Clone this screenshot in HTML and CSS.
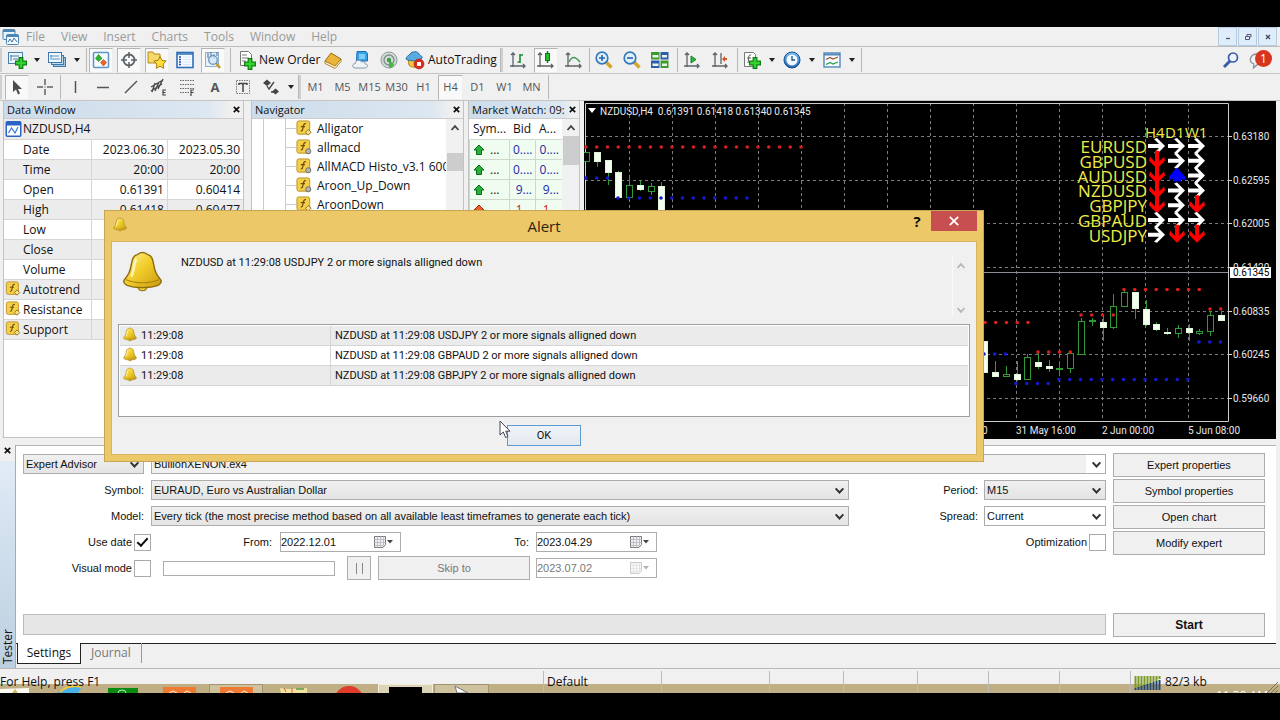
FILE: index.html
```html
<!DOCTYPE html>
<html lang="en">
<head>
<meta charset="utf-8">
<title>NZDUSD,H4</title>
<link rel="stylesheet" href="styles.css">
</head>
<body>
<svg class="defs" aria-hidden="true">
  <defs>
    <linearGradient id="gold" x1="0" y1="0" x2="1" y2="1"><stop offset="0" stop-color="#fff3a0"/><stop offset=".45" stop-color="#f3cf2c"/><stop offset="1" stop-color="#c89a10"/></linearGradient>
    <linearGradient id="blue" x1="0" y1="0" x2="0" y2="1"><stop offset="0" stop-color="#7cc3f2"/><stop offset="1" stop-color="#1d5fae"/></linearGradient>
    <symbol id="i-plus" viewBox="0 0 10 10"><path d="M3.500.5h3v3h3v3h-3v3h-3v-3h-3v-3h3z" fill="#32d52c" stroke="#0b7d12"/></symbol>
    <symbol id="i-newchart" viewBox="0 0 20 20"><rect x="1.500" y="2.500" width="14" height="11" fill="#eaf4fc" stroke="#4a7fa8"/><path d="M4 5v6M3 6h9M6 9h7" stroke="#4a7fa8" fill="none"/><use href="#i-plus" x="8" y="7" width="12" height="12"/></symbol>
    <symbol id="i-profiles" viewBox="0 0 20 20"><rect x="6.500" y="7.500" width="12" height="9" fill="#9cc8e8" stroke="#3f78a8"/><rect x="4.500" y="5.500" width="12" height="9" fill="#bfdcf0" stroke="#3f78a8"/><rect x="1.500" y="2.500" width="13" height="10" fill="#eef7fd" stroke="#3f78a8"/><path d="M4 5v5M3 6h9M5 9h8" stroke="#5d8fb5" fill="none"/></symbol>
    <symbol id="i-market" viewBox="0 0 20 20"><rect x="2.500" y="2.500" width="15" height="15" rx="1" fill="#f6fbff" stroke="#5b95c8" stroke-width="1.500"/><path d="M7.500 4.500l3.500 4-3.500 3-3-3z" fill="#2eb62c" stroke="#147a1a" stroke-width=".6"/><path d="M12.500 16l-3-3.500 3-3 3 3z" fill="#f0622a" stroke="#b03a10" stroke-width=".6"/></symbol>
    <symbol id="i-target" viewBox="0 0 20 20"><circle cx="10" cy="10" r="5.500" fill="none" stroke="#5a6268" stroke-width="1.800"/><path d="M10 2v6M10 12v6M2 10h6M12 10h6" stroke="#5a6268" stroke-width="1.500"/></symbol>
    <symbol id="i-star" viewBox="0 0 20 20"><path d="M1 2h5l1 2h6v9H1z" fill="#f7d96a" stroke="#b58a1a"/><path d="M13 6.500l1.900 3.900 4.300.6-3.100 3 .7 4.300-3.800-2-3.800 2 .7-4.300-3.100-3 4.300-.6z" fill="#ffdf38" stroke="#a87a10"/></symbol>
    <symbol id="i-data" viewBox="0 0 20 20"><rect x="2" y="2.500" width="16" height="15" fill="#f4faff" stroke="#2f6fb8" stroke-width="1.600"/><path d="M2 4h16" stroke="#2f6fb8" stroke-width="1.500"/><path d="M4 7h2M4 9.500h2M4 12h2M4 14.500h2" stroke="#2d4a9a" stroke-width="1.300"/><path d="M8 7h8M8 9.500h8M8 12h8M8 14.500h8" stroke="#d8e8f6"/></symbol>
    <symbol id="i-tester" viewBox="0 0 20 20"><rect x="2.500" y="2.500" width="13" height="14" fill="#e9f2fa" stroke="#8fb2cf"/><path d="M5 3v5M8 2v6M11 4v5M14 2v4" stroke="#3c6b95"/><path d="M13 13l4 5" stroke="#c79a2a" stroke-width="2.600"/><circle cx="10" cy="10" r="4.300" fill="#cfe6f8" fill-opacity=".8" stroke="#6b93b5" stroke-width="1.300"/></symbol>
    <symbol id="i-order" viewBox="0 0 20 20"><path d="M3.500 1.500h8l3 3v11h-11z" fill="#fff" stroke="#757575"/><path d="M5 5h5M5 8h7M5 11h4" stroke="#777"/><use href="#i-plus" x="7" y="8" width="12" height="12"/></symbol>
    <symbol id="i-book" viewBox="0 0 20 20"><path d="M2 11l6-8 10 6-6 8z" fill="#e9b53a" stroke="#9a6a12"/><path d="M2 11l10 5 6-7v2.500l-6 7-10-5z" fill="#fff0c0" stroke="#9a6a12" stroke-width=".8"/></symbol>
    <symbol id="i-cloud" viewBox="0 0 20 20"><path d="M6 1.500h9l1.500 2V11h-11z" fill="#38a2e6" stroke="#1a6fb5"/><path d="M8 4h6v5H8z" fill="#7dccf7"/><path d="M4 18c-3 0-3-4.500.3-4.500 0-4 5.500-4 6.200-1.500 2-1 4 .5 3.700 2 3-.2 3 4 0 4z" fill="#eef3f8" stroke="#8899aa"/></symbol>
    <symbol id="i-signal" viewBox="0 0 20 20"><circle cx="10" cy="10" r="8" fill="#d3dcda" stroke="#8f9b98"/><circle cx="10" cy="10" r="5" fill="none" stroke="#7d8f88" stroke-width="1.300"/><path d="M10 10v8c3 0 5-2 5-4z" fill="#4bb548"/><circle cx="10" cy="10" r="2.200" fill="#3ba03c"/></symbol>
    <symbol id="i-auto" viewBox="0 0 20 20"><path d="M3 9h13l-1 6c-1 3-9 3-11 0z" fill="#f4c842" stroke="#b18418"/><path d="M1 9c0-3 3-3 4-5 2-3 8-3 9 0 1 2 4 2 3 4-3 3-11 4-16 1z" fill="#59ace0" stroke="#2a6fa5"/><circle cx="14" cy="14" r="5" fill="#d92c1c" stroke="#a51b10" stroke-width=".6"/><rect x="12" y="12" width="4" height="4" fill="#fff"/></symbol>
    <symbol id="i-bars" viewBox="0 0 20 20"><path d="M5 3v14M2 16h15M3 5l2-2 2 2M15 14l2 2-2 2" stroke="#5b6368" stroke-width="1.300" fill="none"/><path d="M12 4v9M9.500 12h2.500M12 5h3" stroke="#1b9030" stroke-width="1.600"/></symbol>
    <symbol id="i-candle" viewBox="0 0 20 20"><path d="M4 3v14M1 16h16M2 5l2-2 2 2M15 14l2 2-2 2" stroke="#5b6368" stroke-width="1.300" fill="none"/><path d="M11.500 1v12" stroke="#0a7a18" stroke-width="1.400"/><rect x="9.500" y="3.500" width="4" height="7" fill="#20c030" stroke="#0a7a18"/></symbol>
    <symbol id="i-line" viewBox="0 0 20 20"><path d="M4 3v14M1 16h16M2 5l2-2 2 2M15 14l2 2-2 2" stroke="#5b6368" stroke-width="1.300" fill="none"/><path d="M5 12c3-6 6-6 11 0" stroke="#3f9a58" stroke-width="1.400" fill="none"/></symbol>
    <symbol id="i-zoomin" viewBox="0 0 20 20"><path d="M12 12l5.500 5.500" stroke="#d5a62c" stroke-width="3.400"/><circle cx="8" cy="8" r="5.800" fill="#dff0fb" stroke="#3779b8" stroke-width="1.700"/><path d="M5 8h6M8 5v6" stroke="#2464a8" stroke-width="1.600"/></symbol>
    <symbol id="i-zoomout" viewBox="0 0 20 20"><path d="M12 12l5.500 5.500" stroke="#d5a62c" stroke-width="3.400"/><circle cx="8" cy="8" r="5.800" fill="#dff0fb" stroke="#3779b8" stroke-width="1.700"/><path d="M5 8h6" stroke="#2464a8" stroke-width="1.600"/></symbol>
    <symbol id="i-tiles" viewBox="0 0 20 20"><path d="M1 2h8.500v7.500H1zM10.500 10.500h8V18h-8z" fill="#3a9c2c"/><path d="M10.500 2h8v7.500h-8zM1 10.500h8.500V18H1z" fill="#2c5eae"/><path d="M2.500 5h6v2.500h-6zM12 5h5v2.500h-5zM2.500 13.500h6V16h-6zM12 13.500h5V16h-5z" fill="#e8f4e6"/></symbol>
    <symbol id="i-scroll" viewBox="0 0 20 20"><path d="M5 3v14M2 16h15M3 5l2-2 2 2M15 14l2 2-2 2" stroke="#5b6368" stroke-width="1.300" fill="none"/><path d="M9 6l5 3.500-5 3.500z" fill="#2eb840" stroke="#12802a"/></symbol>
    <symbol id="i-shift" viewBox="0 0 20 20"><path d="M5 3v14M2 16h15M3 5l2-2 2 2M15 14l2 2-2 2M11 3v11" stroke="#5b6368" stroke-width="1.300" fill="none"/><path d="M12 9l3-3v2h2v2h-2v2z" fill="#d0522a"/></symbol>
    <symbol id="i-indic" viewBox="0 0 20 20"><path d="M2.500 2.500h9l2 2v12h-11z" fill="#fff" stroke="#777"/><path d="M9 5c-3-1-2 4-3 8M5 8h4" stroke="#555" fill="none"/><use href="#i-plus" x="7" y="7" width="12" height="12"/></symbol>
    <symbol id="i-clock" viewBox="0 0 20 20"><circle cx="10" cy="10" r="8" fill="url(#blue)" stroke="#155090"/><circle cx="10" cy="10" r="5.500" fill="#f2f8fd"/><path d="M10 6v4h3" stroke="#1e4f86" stroke-width="1.300" fill="none"/></symbol>
    <symbol id="i-templ" viewBox="0 0 20 20"><rect x="2" y="3" width="16" height="14" fill="#f6fbff" stroke="#5289b8" stroke-width="1.400"/><path d="M2 4.500h16" stroke="#5289b8" stroke-width="2"/><path d="M4 9.500l4-2 3 1.500 5-2" stroke="#a05030" fill="none" stroke-width="1.300"/><path d="M4 14.500l4-2 3 1.500 5-2" stroke="#2a9a48" fill="none" stroke-width="1.300"/></symbol>
    <symbol id="i-cursor" viewBox="0 0 20 20"><path d="M6 3v12l3-2.500 2 5 2-1-2-4.500h4z" fill="#4a4e52"/></symbol>
    <symbol id="i-cross" viewBox="0 0 20 20"><path d="M10 2v6M10 12v6M2 10h6M12 10h6M9.500 10h1" stroke="#5b6368" stroke-width="1.500"/></symbol>
    <symbol id="i-vline" viewBox="0 0 20 20"><path d="M10.500 4v12" stroke="#555" stroke-width="1.500"/></symbol>
    <symbol id="i-hline" viewBox="0 0 20 20"><path d="M4 10.500h12" stroke="#555" stroke-width="1.500"/></symbol>
    <symbol id="i-diag" viewBox="0 0 20 20"><path d="M4 16L16 4" stroke="#555" stroke-width="1.500"/></symbol>
    <symbol id="i-channel" viewBox="0 0 20 20"><path d="M2 10L14 3M2 14L13 7M3 15L6 6M6 14l4-9M9 12l5-10" stroke="#4a4a4a" stroke-width="1.400"/><path d="M17 13h-3v5h3M14 15.500h2.500" stroke="#444" stroke-width="1.200" fill="none"/></symbol>
    <symbol id="i-fibo" viewBox="0 0 20 20"><path d="M3 3.500h14M3 7.500h14M3 11.500h14M3 15.500h9" stroke="#666" stroke-dasharray="1.500 1" stroke-width="1.200"/><path d="M17 13h-3v6M14 15.500h2.500" stroke="#444" stroke-width="1.200" fill="none"/></symbol>
    <symbol id="i-label" viewBox="0 0 20 20"><rect x="3.500" y="3.500" width="13" height="13" fill="none" stroke="#777" stroke-dasharray="1.500 1"/><path d="M6 6.500h8M10 6.500V15M6 6v2M14 6v2" stroke="#444" stroke-width="1.500"/></symbol>
    <symbol id="i-arrows" viewBox="0 0 20 20"><path d="M2 6l4-3.500 4 3.500-4 3zM11 14.500l3.500-3 3.500 3-3.500 3z" fill="#444"/><path d="M6 9l2 3 5-7M10 15h3" stroke="#444" fill="none" stroke-width="1.300"/></symbol>
    <symbol id="i-search" viewBox="0 0 20 20"><path d="M9 11l-6 6" stroke="#3a5ca8" stroke-width="3"/><circle cx="12" cy="7.500" r="4.500" fill="#eef3fb" stroke="#3a5ca8" stroke-width="1.700"/></symbol>
    <symbol id="i-chat" viewBox="0 0 20 20"><path d="M8 4C1 4-1 12 5 14l-.5 4 4-3.500c8 0 9-10-.5-10.500z" fill="#f4f4f4" stroke="#8d9296" stroke-width="1.300"/></symbol>
    <symbol id="i-func" viewBox="0 0 18 18"><rect x="1" y="1" width="13.500" height="14" rx="2" fill="#f4cf4a" stroke="#b98f22"/><path d="M10.500 4c-2.500-.8-2.500 2-3 4s-.5 4-2.500 3.500M5 7h4.500" stroke="#6d4e08" stroke-width="1.300" fill="none"/><path d="M13 10l3 3-3 3-3-3z" fill="#f6e08c" stroke="#8d6e1c"/></symbol>
    <symbol id="i-funcg" viewBox="0 0 18 18"><rect x="1" y="1" width="13.500" height="14" rx="2" fill="#f4cf4a" stroke="#b98f22"/><path d="M10.500 4c-2.500-.8-2.500 2-3 4s-.5 4-2.500 3.500M5 7h4.500" stroke="#6d4e08" stroke-width="1.300" fill="none"/><circle cx="13" cy="13" r="2.700" fill="#b5b5b0" stroke="#6b6b6b"/></symbol>
    <symbol id="i-chartwin" viewBox="0 0 16 16"><rect x=".75" y=".75" width="14.500" height="14.500" rx="1" fill="#fff" stroke="#2a62c4" stroke-width="1.500"/><path d="M1 1h14v3.500H1z" fill="#2a62c4"/><path d="M3 12l3-5 3.500 5 3-6" stroke="#3f7fd8" fill="none" stroke-width="1.300"/></symbol>
    <symbol id="i-up" viewBox="0 0 12 12"><path d="M6 1l5 5H8.500v4.500h-5V6H1z" fill="#27b13a" stroke="#0d6a1c"/></symbol>
    <symbol id="i-down" viewBox="0 0 12 12"><path d="M6 1l5 5H8.500v4.500h-5V6H1z" fill="#f0602c" stroke="#a82c0c"/></symbol>
    <symbol id="i-bell" viewBox="0 0 40 40"><path d="M16 35c0 5 8 5 8 0z" fill="#f0cf3a" stroke="#8d6d10"/><path d="M20 1.500c3 0 4 1.500 5 2 4 1 5 4 6 10 1 7 3 10 7 15 1 2-1 4-3 5-8 3-22 3-30 0-2-1-4-3-3-5 4-5 6-8 7-15 1-6 2-9 6-10 1-.5 2-2 5-2z" fill="url(#gold)" stroke="#8d6d10" stroke-width="1.400"/><path d="M4 28c9 4 23 4 32 0" fill="none" stroke="#a9830f"/><path d="M14 8c-3 5-2 12-5 17" fill="none" stroke="#fffbd8" stroke-width="2.500" opacity=".8"/></symbol>
    <symbol id="i-chev" viewBox="0 0 10 10"><path d="M1.500 3L5 6.800 8.500 3" fill="none" stroke="currentColor" stroke-width="1.800"/></symbol>
    <symbol id="i-chevup" viewBox="0 0 10 10"><path d="M1.500 7L5 3.200 8.500 7" fill="none" stroke="currentColor" stroke-width="1.800"/></symbol>
    <symbol id="i-x" viewBox="0 0 10 10"><path d="M2 2l6 6M8 2l-6 6" stroke="currentColor" stroke-width="1.900"/></symbol>
    <symbol id="i-xthin" viewBox="0 0 10 10"><path d="M2 2l6 6M8 2l-6 6" stroke="currentColor" stroke-width="1.300"/></symbol>
    <symbol id="i-cal" viewBox="0 0 20 12"><path d="M.5.500h11v8l-2.500 3H.5z" fill="#f2f2f2" stroke="#777"/><path d="M.5 3.500h11M.5 6.500h11M.5 9.500h9M3.500.5v11M6.500.5v11M9.500.5v9" stroke="#bdbdc4"/><path d="M13 4h6l-3 3.500z" fill="#444"/></symbol>
  </defs>
</svg>

<div class="window">
  <nav class="menubar">
    <svg class="app-icon" viewBox="0 0 18 18"><rect x="1" y="1.500" width="12" height="10" rx="1" fill="#e8f3fb" stroke="#4d86b3"/><path d="M1 3h12" stroke="#4d86b3" stroke-width="2"/><rect x="4.500" y="6.500" width="12" height="10" rx="1" fill="#f4faff" stroke="#4d86b3"/><path d="M4.500 8h12" stroke="#4d86b3" stroke-width="2"/><path d="M6 14l2-3 2 3 2-4 3 4" fill="none" stroke="#3c74a8"/></svg>
    <button>File</button><button>View</button><button>Insert</button><button>Charts</button><button>Tools</button><button>Window</button><button>Help</button>
    <div class="mdi">
      <button aria-label="Minimize"><svg viewBox="0 0 10 10"><path d="M3 6.500h4" stroke="#557" stroke-width="1.300"/></svg></button>
      <button aria-label="Restore"><svg viewBox="0 0 10 10"><path d="M4 4V2.500h4V5H7M2.500 4.500h4v3h-4z" stroke="#557" fill="none"/></svg></button>
      <button aria-label="Close"><svg viewBox="0 0 10 10"><path d="M3 3l4 4M7 3L3 7" stroke="#446" stroke-width="1.200"/></svg></button>
    </div>
  </nav>

  <div class="toolbar">
    <i class="grip"></i>
    <button class="tool" aria-label="New chart"><svg><use href="#i-newchart"/></svg></button><button class="drop" aria-label="Chart list"></button>
    <button class="tool" aria-label="Profiles"><svg><use href="#i-profiles"/></svg></button><button class="drop" aria-label="Profile list"></button>
    <i class="sep"></i>
    <button class="tool on" aria-label="Market Watch"><svg><use href="#i-market"/></svg></button>
    <button class="tool on" aria-label="Data Window"><svg><use href="#i-target"/></svg></button>
    <button class="tool on" aria-label="Navigator"><svg><use href="#i-star"/></svg></button>
    <button class="tool" aria-label="Terminal"><svg><use href="#i-data"/></svg></button>
    <button class="tool on" aria-label="Strategy Tester"><svg><use href="#i-tester"/></svg></button>
    <i class="sep"></i>
    <button class="wide order"><svg><use href="#i-order"/></svg>New Order</button>
    <button class="tool" aria-label="MetaEditor"><svg><use href="#i-book"/></svg></button>
    <button class="tool" aria-label="Hosting"><svg><use href="#i-cloud"/></svg></button>
    <button class="tool" aria-label="Signals"><svg><use href="#i-signal"/></svg></button>
    <button class="wide auto"><svg><use href="#i-auto"/></svg>AutoTrading</button>
    <i class="sep"></i><i class="grip"></i>
    <button class="tool" aria-label="Bar chart"><svg><use href="#i-bars"/></svg></button>
    <button class="tool on" aria-label="Candlesticks"><svg><use href="#i-candle"/></svg></button>
    <button class="tool" aria-label="Line chart"><svg><use href="#i-line"/></svg></button>
    <i class="sep thin"></i>
    <button class="tool" aria-label="Zoom in"><svg><use href="#i-zoomin"/></svg></button>
    <button class="tool" aria-label="Zoom out"><svg><use href="#i-zoomout"/></svg></button>
    <button class="tool" aria-label="Tile windows"><svg><use href="#i-tiles"/></svg></button>
    <i class="sep"></i>
    <button class="tool" aria-label="Auto scroll"><svg><use href="#i-scroll"/></svg></button>
    <button class="tool" aria-label="Chart shift"><svg><use href="#i-shift"/></svg></button>
    <i class="sep"></i>
    <button class="tool" aria-label="Indicators"><svg><use href="#i-indic"/></svg></button><button class="drop" aria-label="Indicator list"></button>
    <button class="tool" aria-label="Periods"><svg><use href="#i-clock"/></svg></button><button class="drop" aria-label="Period list"></button>
    <button class="tool" aria-label="Templates"><svg><use href="#i-templ"/></svg></button><button class="drop" aria-label="Template list"></button>
    <i class="sep"></i>
    <div class="right">
      <button class="tool" aria-label="Search"><svg><use href="#i-search"/></svg></button>
      <button class="tool chat" aria-label="Messages"><svg><use href="#i-chat"/></svg><span class="badge">1</span></button>
    </div>
  </div>

  <div class="toolbar second">
    <i class="grip"></i>
    <button class="tool on" aria-label="Cursor"><svg><use href="#i-cursor"/></svg></button>
    <button class="tool" aria-label="Crosshair"><svg><use href="#i-cross"/></svg></button>
    <i class="sep thin"></i>
    <button class="tool" aria-label="Vertical line"><svg><use href="#i-vline"/></svg></button>
    <button class="tool" aria-label="Horizontal line"><svg><use href="#i-hline"/></svg></button>
    <button class="tool" aria-label="Trendline"><svg><use href="#i-diag"/></svg></button>
    <button class="tool" aria-label="Channel"><svg><use href="#i-channel"/></svg></button>
    <button class="tool" aria-label="Fibonacci"><svg><use href="#i-fibo"/></svg></button>
    <button class="tool letter">A</button>
    <button class="tool" aria-label="Text label"><svg><use href="#i-label"/></svg></button>
    <button class="tool" aria-label="Arrows"><svg><use href="#i-arrows"/></svg></button><button class="drop" aria-label="Arrow list"></button>
    <i class="sep thin"></i><i class="grip"></i>
    <button class="tool tf">M1</button><button class="tool tf">M5</button><button class="tool tf">M15</button><button class="tool tf">M30</button><button class="tool tf">H1</button><button class="tool tf on">H4</button><button class="tool tf">D1</button><button class="tool tf">W1</button><button class="tool tf">MN</button>
    <i class="sep"></i>
  </div>

  <main class="workspace">
    <section class="panel data">
      <header><h2>Data Window</h2><button aria-label="Close Data Window"><svg><use href="#i-x"/></svg></button></header>
      <table>
        <colgroup><col><col class="num"><col class="num"></colgroup>
        <tr><th colspan="3" class="sym"><svg><use href="#i-chartwin"/></svg>NZDUSD,H4</th></tr>
        <tr><th>Date</th><td>2023.06.30</td><td>2023.05.30</td></tr>
        <tr><th>Time</th><td>20:00</td><td>20:00</td></tr>
        <tr><th>Open</th><td>0.61391</td><td>0.60414</td></tr>
        <tr><th>High</th><td>0.61418</td><td>0.60477</td></tr>
        <tr><th>Low</th><td></td><td></td></tr>
        <tr><th>Close</th><td></td><td></td></tr>
        <tr><th>Volume</th><td></td><td></td></tr>
        <tr><th class="sym"><svg><use href="#i-func"/></svg>Autotrend</th><td></td><td></td></tr>
        <tr><th class="sym"><svg><use href="#i-func"/></svg>Resistance</th><td></td><td></td></tr>
        <tr><th class="sym"><svg><use href="#i-func"/></svg>Support</th><td></td><td></td></tr>
      </table>
    </section>
    <section class="panel navigator">
      <header><h2>Navigator</h2><button aria-label="Close Navigator"><svg><use href="#i-x"/></svg></button></header>
      <div class="body">
        <ul class="tree">
          <li><svg><use href="#i-func"/></svg>Alligator</li>
          <li><svg><use href="#i-funcg"/></svg>allmacd</li>
          <li><svg><use href="#i-funcg"/></svg>AllMACD Histo_v3.1 600</li>
          <li><svg><use href="#i-funcg"/></svg>Aroon_Up_Down</li>
          <li><svg><use href="#i-func"/></svg>AroonDown</li>
        </ul>
        <div class="scroll"><svg><use href="#i-chevup"/></svg><i class="thumb low"></i></div>
      </div>
    </section>
    <section class="panel market">
      <header><h2>Market Watch: 09:</h2><button aria-label="Close Market Watch"><svg><use href="#i-x"/></svg></button></header>
      <div class="body">
        <table>
          <tr><th>Sym...</th><th>Bid</th><th>A...</th></tr>
          <tr><td><svg><use href="#i-up"/></svg>...</td><td>0....</td><td>0....</td></tr>
          <tr><td><svg><use href="#i-up"/></svg>...</td><td>0....</td><td>0....</td></tr>
          <tr><td><svg><use href="#i-up"/></svg>...</td><td>9...</td><td>9...</td></tr>
          <tr class="red"><td><svg><use href="#i-down"/></svg>...</td><td>1...</td><td>1...</td></tr>
        </table>
        <div class="scroll"><svg><use href="#i-chevup"/></svg><i class="thumb"></i></div>
      </div>
    </section>
    <section class="chart" aria-label="NZDUSD,H4 chart"><svg id="chart" viewBox="584 101 692 338" preserveAspectRatio="xMinYMin meet"></svg></section>
  </main>

  <section class="tester">
    <aside><button aria-label="Close Tester"><svg><use href="#i-x"/></svg></button><span>Tester</span></aside>
    <div class="tester-main">
      <form class="settings">
        <div class="fields">
          <div class="row first">
            <span class="pick mode"><select aria-label="Tester mode"><option>Expert Advisor</option></select><svg><use href="#i-chev"/></svg></span>
            <span class="pick grow flat"><select aria-label="Expert"><option>BullionXENON.ex4</option></select><svg><use href="#i-chev"/></svg></span>
          </div>
          <div class="row">
            <label class="lead" for="symbol">Symbol:</label>
            <span class="pick grow"><select id="symbol"><option>EURAUD, Euro vs Australian Dollar</option></select><svg><use href="#i-chev"/></svg></span>
            <label class="side" for="period">Period:</label>
            <span class="pick short"><select id="period"><option>M15</option></select><svg><use href="#i-chev"/></svg></span>
          </div>
          <div class="row">
            <label class="lead" for="model">Model:</label>
            <span class="pick grow"><select id="model"><option>Every tick (the most precise method based on all available least timeframes to generate each tick)</option></select><svg><use href="#i-chev"/></svg></span>
            <label class="side" for="spread">Spread:</label>
            <span class="pick short white"><select id="spread"><option>Current</option></select><svg><use href="#i-chev"/></svg></span>
          </div>
          <div class="row">
            <label class="check" for="usedate">Use date</label><input type="checkbox" id="usedate" checked>
            <label class="from" for="from">From:</label>
            <span class="date"><input type="text" id="from" value="2022.12.01"><svg><use href="#i-cal"/></svg></span>
            <label class="to" for="to">To:</label>
            <span class="date"><input type="text" id="to" value="2023.04.29"><svg><use href="#i-cal"/></svg></span>
            <label class="opt" for="opt">Optimization</label><input type="checkbox" id="opt">
          </div>
          <div class="row">
            <label class="check" for="visual">Visual mode</label><input type="checkbox" id="visual">
            <input class="speed" type="text" aria-label="Speed" disabled>
            <button type="button" class="btn pause" aria-label="Pause" disabled><i></i><i></i></button>
            <button type="button" class="btn skip" disabled>Skip to</button>
            <span class="date off"><input type="text" aria-label="Skip date" value="2023.07.02" disabled><svg><use href="#i-cal"/></svg></span>
          </div>
          <div class="bar" role="progressbar" aria-label="Test progress"></div>
        </div>
        <div class="actions">
          <button type="button" class="btn">Expert properties</button>
          <button type="button" class="btn">Symbol properties</button>
          <button type="button" class="btn">Open chart</button>
          <button type="button" class="btn">Modify expert</button>
          <button type="button" class="btn start">Start</button>
        </div>
      </form>
      <div class="tabs"><button class="active">Settings</button><button>Journal</button></div>
    </div>
  </section>

  <footer class="status">
    <span class="help">For Help, press F1</span><span class="profile">Default</span><span class="c1"></span><span class="c2"></span><span class="c2"></span><span class="c3"></span><span class="c3"></span><span class="c3"></span>
    <span class="net"><svg viewBox="0 0 27 15"><path d="M1.500 1v12M4.500 1v12M7.500 1v11M10.500 1v10M13.500 1v9M16.500 1v8M19.500 1v6M22.500 1v5M25.500 1v3" stroke="#7b9a24" stroke-width="2"/><path d="M1.500 13v2M4.500 12v3M7.500 11v4M10.500 10v5M13.500 9v6M16.500 8v7M19.500 7v8M22.500 6v9M25.500 5v10" stroke="#23466e" stroke-width="2"/></svg>82/3 kb</span>
    <svg class="sizer" viewBox="0 0 12 12"><path d="M1 12L12 1M5 12l7-7M9 12l3-3" stroke="#7d7358"/></svg>
  </footer>

  <div class="taskbar">
    <svg viewBox="0 0 500 9" aria-hidden="true">
      <path d="M0 5l29-1v5H0z" fill="#fbfbf2"/><path d="M12 9l3-4 3 4" fill="#d0b860"/>
      <path d="M58 9c2-4 8-6 14-5l9-2c1 1-1 4-3 7z" fill="#4ab0e8"/><path d="M60 8c6-5 14-7 21-5" stroke="#f2c83c" stroke-width="2" fill="none"/>
      <rect x="108" y="4" width="30" height="5" fill="#0b8a10"/><path d="M118 9a4 3 0 0 1 8 0" stroke="#bfe6c0" fill="none"/>
      <rect x="163" y="3" width="33" height="6" fill="#ee7a33"/><path d="M169 9l4-2 4 2M184 9l3-2 4 2" stroke="#fff0e0" fill="none"/>
      <rect x="209.500" y=".5" width="53" height="12" fill="#cfc29f" stroke="#a3946e"/><rect x="220" y="3" width="33" height="6" fill="#ee7a33"/><path d="M226 9l4-2 4 2M241 9l3-2 4 2" stroke="#fff0e0" fill="none"/>
      <path d="M280 4l8 1 19-1v5h-26z" fill="#f3e2a0"/><path d="M284 4l2 4M292 4v5" stroke="#d0653a"/><path d="M296 5h8" stroke="#5a9a4a" stroke-width="1.500"/>
      <circle cx="349" cy="17" r="15" fill="#df3c2c"/>
      <rect x="378.500" y=".5" width="54" height="12" fill="#dcd3b8" stroke="#f2ecd6"/><rect x="389" y="3" width="33" height="6" fill="#000"/>
      <rect x="434.500" y=".5" width="54" height="12" fill="#cfc29f" stroke="#a3946e"/><path d="M455 2l13 7h-11z" fill="#fff" stroke="#777"/>
    </svg>
    <time>11:30 AM</time>
  </div>

  <div class="dialog" role="dialog" aria-labelledby="dlg-title">
    <div class="titlebar">
      <svg class="bell-sm"><use href="#i-bell"/></svg>
      <h1 id="dlg-title">Alert</h1>
      <div class="caption"><button class="ask" aria-label="Help">?</button><button class="close" aria-label="Close"><svg><use href="#i-xthin"/></svg></button></div>
    </div>
    <div class="dlg-body">
      <div class="message">
        <svg class="bell"><use href="#i-bell"/></svg>
        <p>NZDUSD at 11:29:08 USDJPY 2 or more signals alligned down</p>
        <div class="arrows"><svg><use href="#i-chevup"/></svg><svg><use href="#i-chev"/></svg></div>
      </div>
      <div class="log">
        <table>
          <tr><td><svg><use href="#i-bell"/></svg>11:29:08</td><td>NZDUSD at 11:29:08 USDJPY 2 or more signals alligned down</td></tr>
          <tr><td><svg><use href="#i-bell"/></svg>11:29:08</td><td>NZDUSD at 11:29:08 GBPAUD 2 or more signals alligned down</td></tr>
          <tr><td><svg><use href="#i-bell"/></svg>11:29:08</td><td>NZDUSD at 11:29:08 GBPJPY 2 or more signals alligned down</td></tr>
        </table>
      </div>
      <button class="ok">OK</button>
      <svg class="pointer" viewBox="0 0 12 19"><path d="M1 1v14l3.300-3 2.300 5.500 2.400-1-2.300-5.300H11z" fill="#fff" stroke="#445"/></svg>
    </div>
  </div>
</div>
<script src="chart.js"></script>
</body>
</html>
```

FILE: styles.css
```css
* { box-sizing: border-box; }
body {
  margin: 0;
  padding: 27px 0;
  min-height: 100vh;
  background: #000;
  color: #111;
  font: 12px/16px "Open Sans", "Noto Sans", sans-serif;
  display: flex;
}
button, input, select { font: inherit; color: inherit; margin: 0; }
button { border: 0; padding: 0; background: none; }
h1, h2, p, ul { margin: 0; padding: 0; font-weight: 400; }
.defs { position: absolute; width: 0; height: 0; }
.window { position: relative; flex: 1; min-width: 0; display: flex; flex-direction: column; background: #f0f0f0; overflow: hidden; }

.menubar { display: flex; align-items: center; height: 20px; padding-left: 2px; border-bottom: 1px solid #bdbdbd; color: #999; }
.menubar > button { padding: 0 8px; }
.app-icon { width: 18px; height: 18px; margin-right: -2px; }
.mdi { display: flex; gap: 1px; margin-left: auto; padding-right: 3px; }
.mdi button { width: 19px; height: 19px; background: #dfedfa; border: 1px solid #b4cbe0; display: grid; place-items: center; }
.mdi svg { width: 10px; height: 10px; }

.toolbar { display: flex; align-items: center; height: 27px; border-bottom: 1px solid #c4c4c4; }
.grip { width: 3px; height: 24px; border-left: 2px solid #d0d0d0; }
.sep { width: 4px; height: 24px; border-right: 1px solid #b8b8b8; }
.sep.thin { width: 2px; }
.tool { width: 24px; height: 25px; margin: 0 2px; display: grid; place-items: center; }
.tool svg, .wide svg { flex: none; width: 20px; height: 20px; }
.tool.on { background: #f9f9f9; border: 1px solid #b5b5b5; border-right-color: #eee; border-bottom-color: #eee; }
.wide { display: flex; align-items: center; gap: 2px; white-space: nowrap; }
.order { width: 88px; padding-left: 6px; }
.auto { width: 94px; padding-left: 2px; gap: 3px; }
.drop { width: 12px; height: 24px; display: grid; place-items: center; }
.drop::after { content: ""; border: 3px solid transparent; border-top: 4px solid #222; border-bottom: 0; }
.right { display: flex; margin-left: auto; padding-right: 7px; }
.chat { position: relative; }
.badge { position: absolute; left: 8px; top: 2px; width: 17px; height: 17px; border-radius: 50%; background: #d8351f; color: #fff; line-height: 17px; }
.second .tool { color: #555; }
.second .letter { font-size: 13px; font-weight: 700; }
.second .tf { width: 25px; margin: 0 1px; font-size: 11px; }

.workspace { flex: 1; min-height: 300px; display: flex; padding: 0 4px 0 3px; }
.panel { display: flex; flex-direction: column; margin-bottom: 2px; background: #fff; border: 1px solid #c2c2c2; border-top: 0; }
.panel header { display: flex; align-items: center; height: 18px; padding-left: 3px; background: linear-gradient(90deg, #ccdcea, #dce7f1 85%, #f0f0f0 95%); border-bottom: 1px solid #ccc; }
.panel h2 { flex: 1; font-size: 11px; line-height: 16px; white-space: nowrap; }
.panel header button { width: 14px; height: 16px; display: grid; place-items: center; }
.panel header svg { width: 9px; height: 9px; }
.panel .body { flex: 1; display: flex; min-height: 0; overflow: hidden; }
.data { width: 241px; margin-right: 7px; }
.navigator { width: 213px; margin-right: 4px; }
.market { width: 112px; margin-right: 4px; }
table { border-collapse: separate; border-spacing: 0; table-layout: fixed; width: 100%; }
.data .num { width: 76px; }
.data td, .data th { height: 20px; padding: 0 3px 0 19px; font-weight: 400; border-bottom: 1px solid #d6d6d6; white-space: nowrap; line-height: 16px; }
.data th { text-align: left; }
.data td { text-align: right; padding-left: 0; border-left: 1px solid #d6d6d6; }
.data tr:nth-child(odd) > * { background: #ececec; }
.data th.sym { padding: 0 0 0 1px; }
.data .sym svg { width: 17px; height: 16px; vertical-align: middle; margin: -2px 1px 0 0; }
.data tr:first-child th { height: 21px; }
.tree { flex: 1; min-width: 0; list-style: none; overflow: hidden; margin-left: 11px; border-left: 1px solid #ccc; }
.tree li { display: flex; align-items: center; height: 19px; margin-left: 21px; border-left: 1px solid #ccc; white-space: nowrap; }
.tree li::before { content: ""; flex: none; width: 10px; border-top: 1px solid #ccc; }
.tree svg { flex: none; width: 17px; height: 17px; margin-right: 4px; }
.scroll { flex: none; width: 17px; background: #f1f1f1; display: flex; flex-direction: column; align-items: center; color: #444; }
.scroll svg { width: 10px; height: 10px; margin: 4px 0 3px; }
.thumb { width: 16px; height: 29px; background: #cdcdcd; }
.thumb.low { height: 18px; margin-top: 17px; }
.market table { align-self: flex-start; flex: 1; }
.market td, .market th { height: 20px; padding: 0 0 0 3px; font-weight: 400; text-align: left; border-bottom: 1px solid #ccd9cc; border-left: 1px solid #ccd9cc; white-space: nowrap; }
.market th { height: 21px; border-left-color: #fff; }
.market th:nth-child(1) { width: 40px; }
.market th:nth-child(2) { width: 26px; }
.market td { background: #effcef; color: #1a2aa8; text-align: right; padding-right: 3px; }
.market td:first-child { color: #111; text-align: left; }
.market .red td { color: #d01818; }
.market td svg { width: 12px; height: 12px; vertical-align: middle; margin-right: 5px; }

.chart { flex: 1; min-width: 0; background: #000; margin-bottom: 1px; overflow: hidden; }
.chart svg { display: block; width: 100%; font: 10px Roboto, sans-serif; fill: #e8e8e8; }
.chart .tag { fill: #000; }
.chart .pair { font: 17px "Open Sans", sans-serif; fill: #eded45; }
.chart .frame { font: 15px "Open Sans", sans-serif; fill: #eded45; }

.tester { display: flex; padding: 5px 4px 0 0; border-bottom: 1px solid #b9b9b9; }
.tester aside { width: 15px; display: flex; flex-direction: column; align-items: center; justify-content: space-between; background: linear-gradient(#f0f0f0 16px, #e0ebf6 16px, #bccfe0); }
.tester aside svg { width: 9px; height: 9px; display: block; margin-top: 1px; }
.tester aside span { writing-mode: vertical-rl; transform: rotate(180deg); padding-top: 4px; }
.tester-main { flex: 1; min-width: 0; border-left: 1px solid #aaa; }
.settings { display: flex; gap: 7px; padding: 5px 11px 8px 7px; background: #fff; border-top: 1px solid #b5b5b5; font: 11px/16px "Liberation Sans", Arial, sans-serif; }
.fields { flex: 1; min-width: 0; display: flex; flex-direction: column; }
.row { display: flex; align-items: center; height: 26px; }
.row.first { gap: 7px; }
.pick { position: relative; display: flex; height: 20px; }
.pick select { appearance: none; width: 100%; height: 20px; padding: 0 18px 0 2px; border: 1px solid #adadad; border-radius: 0; background: linear-gradient(#f0f0f0, #e4e4e4); color: #111; }
.pick svg { position: absolute; right: 4px; top: 5px; width: 11px; height: 11px; color: #333; pointer-events: none; }
.grow { flex: 1; min-width: 0; }
.flat select { background: linear-gradient(90deg, #f0f0f0, #f0f0f0) no-repeat 0 0 / calc(100% - 19px) 100% #fff; }
.white select { background: #fff; }
.mode { width: 121px; }
.short { width: 122px; }
.lead { width: 128px; padding-right: 7px; text-align: right; }
.side { width: 135px; padding-right: 6px; text-align: right; }
.check { width: 109px; text-align: right; margin-right: 2px; }
.from { width: 129px; padding-right: 8px; text-align: right; }
.to { width: 135px; padding-right: 7px; text-align: right; }
.opt { margin: 0 2px 0 auto; }
input[type="checkbox"] { appearance: none; width: 17px; height: 17px; border: 1px solid #aaa; background: #fff; display: grid; place-items: center; }
input[type="checkbox"]:checked::after { content: ""; width: 9px; height: 4px; border: solid #111; border-width: 0 0 2px 2px; transform: rotate(-48deg); margin-top: -3px; }
.date { position: relative; width: 121px; height: 20px; }
.date input { width: 100%; height: 20px; padding: 0; border: 1px solid #adadad; background: #fff; color: #111; }
.date svg { position: absolute; right: 7px; top: 4px; width: 20px; height: 12px; }
.date.off input { color: #777; }
.off svg { opacity: .4; }
.speed { width: 172px; height: 15px; margin: 0 12px; border: 1px solid #adadad; background: #fff; }
.btn { height: 24px; border: 1px solid #adadad; background: #f0f0f0; color: #111; }
.btn:disabled { color: #777; }
.pause { width: 24px; margin-right: 7px; display: flex; align-items: center; justify-content: center; gap: 5px; }
.pause i { width: 1px; height: 11px; background: #888; }
.skip { width: 152px; margin-right: 6px; }
.bar { height: 21px; margin-top: 33px; border: 1px solid #bcbcbc; background: #e6e6e6; }
.actions { width: 152px; display: flex; flex-direction: column; gap: 2px; padding-top: 2px; margin-bottom: -2px; }
.actions .start { margin: auto 0 0; font-size: 12px; font-weight: 700; }
.tabs { display: flex; height: 25px; padding-left: 1px; background: linear-gradient(#222 1px, #f0f0f0 1px); }
.tabs button { height: 20px; padding: 0 10px; color: #777; border-right: 1px solid #999; }
.tabs .active { width: 64px; padding: 0; color: #111; background: #fff; border: 1px solid #222; border-top: 0; height: 21px; }

.status { position: relative; z-index: 1; display: flex; height: 24px; padding-right: 20px; }
.status > span { flex: none; border-right: 1px solid #bbb; height: 22px; margin-top: 2px; line-height: 22px; white-space: nowrap; }
.status .help { flex: 1; }
.profile { width: 118px; padding-left: 3px; }
.c1 { width: 108px; }
.c2 { width: 74px; }
.c3 { width: 71px; }
.status .net { width: 129px; padding-left: 3px; border: 0; display: flex; align-items: center; gap: 4px; }
.net svg { width: 27px; height: 15px; }
.sizer { position: absolute; right: 2px; bottom: 0; width: 12px; height: 12px; }
.taskbar { position: absolute; left: 0; right: 0; bottom: 0; height: 9px; background: #c0ae85; overflow: hidden; }
.taskbar svg { display: block; width: 500px; height: 9px; }
.taskbar time { position: absolute; right: 12px; top: 4px; color: #fff; }

.dialog { position: absolute; z-index: 2; left: 104px; top: 183px; width: 880px; padding: 0 6px 6px; background: #ecc868; border: 1px solid #c6a654; }
.titlebar { position: relative; height: 30px; display: flex; align-items: flex-start; justify-content: center; }
.titlebar h1 { font-size: 15px; line-height: 30px; color: #2e2610; }
.bell-sm { position: absolute; left: 2px; top: 6px; width: 14px; height: 15px; }
.caption { position: absolute; right: 0; top: 0; display: flex; gap: 7px; }
.ask { width: 14px; font-size: 15px; line-height: 20px; font-weight: 700; }
.close { width: 46px; height: 20px; background: #c84f4f; color: #fff; display: grid; place-items: center; }
.close svg { width: 14px; height: 14px; }
.dlg-body { position: relative; display: flex; flex-direction: column; background: #f0f0f0; border: 1px solid #d9b65e; padding: 9px 6px 8px; font-family: Roboto, "Open Sans", sans-serif; font-size: 11px; }
.message { display: flex; height: 73px; padding-left: 4px; }
.bell { width: 41px; height: 41px; margin-right: 18px; }
.message p { flex: 1; padding-top: 4px; line-height: 16px; }
.arrows { width: 18px; margin: 6px 0 4px; border-left: 1px solid #fafafa; display: flex; flex-direction: column; justify-content: space-between; align-items: center; color: #b5b5b5; height: 60px; padding: 4px 2px 2px 0; }
.arrows svg { width: 10px; height: 10px; }
.log { height: 93px; background: #fff; border: 1px solid #9a9fa4; padding: 1px; }
.log td { height: 20px; padding: 0 0 0 4px; border-bottom: 1px solid #d4d4d4; }
.log td:first-child { width: 211px; padding-left: 3px; border-right: 1px solid #d4d4d4; }
.log tr:nth-child(odd) td { background: #ebebeb; }
.log svg { width: 14px; height: 15px; vertical-align: middle; margin: -2px 4px 0 0; }
.ok { width: 74px; height: 21px; margin: 8px auto 0; border: 1px solid #5b9bd0; background: linear-gradient(#f0f4f8, #e2e8ee); }
.pointer { position: absolute; left: 387px; top: 178px; width: 12px; height: 19px; }
```

FILE: chart.js
```js
const NS = "http://www.w3.org/2000/svg";
const chart = document.getElementById("chart");

function add(name, attrs, text) {
  const node = document.createElementNS(NS, name);
  for (const key in attrs) node.setAttribute(key, attrs[key]);
  if (text) node.textContent = text;
  chart.appendChild(node);
}

// Grid, frame and price line
const grid = { stroke: "#7c7c7c", "stroke-dasharray": "3 3" };
for (let x = 629.5; x < 1228; x += 43) add("path", { d: `M${x} 103V421`, ...grid });
const prices = [[136, "0.63180"], [180, "0.62595"], [223, "0.62005"], [267, "0.61420"], [311, "0.60835"], [354, "0.60245"], [398, "0.59660"]];
prices.forEach(([y, label]) => {
  add("path", { d: `M585 ${y + 0.5}H1228`, ...grid });
  add("path", { d: `M1228 ${y + 0.5}h4`, stroke: "#ddd" });
  add("text", { x: 1233, y: y + 4 }, label);
});
add("path", { d: "M585.5 421.500V103.500H1228.500V421.500z", fill: "none", stroke: "#ccc" });
add("path", { d: "M585 272.500H1228", stroke: "#8a8f98" });
add("rect", { x: 1230, y: 267, width: 41, height: 11, fill: "#fff" });
add("text", { x: 1233, y: 276, class: "tag" }, "0.61345");
add("path", { d: "M588 108h8l-4 5z", fill: "#fff" });
add("text", { x: 600, y: 115 }, "NZDUSD,H4\u00a0\u00a00.61391 0.61418 0.61340 0.61345");
[[1016, "31 May 16:00"], [1102, "2 Jun 00:00"], [1188, "5 Jun 08:00"], [982, "0"]].forEach(([x, label]) => add("text", { x, y: 434 }, label));

// Candles: centre, body top, body bottom, wick top, wick bottom, filled
const candles = [
  [586, 152, 161, 152, 162, 0], [597, 152, 161, 152, 167, 1], [608, 160, 172, 160, 185, 1], [618, 172, 197, 171, 197, 1],
  [629, 185, 197, 176, 197, 0], [640, 185, 189, 181, 191, 1], [651, 186, 191, 183, 195, 0], [661, 186, 215, 182, 215, 1],
  [984, 341, 372, 341, 372, 1], [995, 372, 376, 361, 377, 1], [1006, 374, 376, 366, 376, 0], [1017, 374, 379, 361, 381, 1],
  [1027, 357, 379, 354, 380, 0], [1038, 362, 366, 353, 369, 1], [1049, 366, 368, 360, 372, 1], [1059, 368, 369, 361, 376, 0],
  [1070, 353, 368, 351, 373, 0], [1081, 321, 354, 318, 355, 0], [1092, 320, 321, 318, 326, 0], [1103, 322, 327, 315, 341, 1],
  [1113, 306, 327, 294, 329, 0], [1124, 292, 306, 290, 307, 0], [1135, 292, 308, 292, 319, 1], [1146, 309, 324, 300, 326, 1],
  [1156, 324, 329, 322, 331, 1], [1167, 332, 333, 328, 335, 1], [1178, 328, 333, 325, 338, 0], [1189, 328, 332, 324, 341, 1],
  [1199, 331, 333, 329, 335, 0], [1210, 315, 331, 311, 336, 0], [1221, 315, 320, 311, 320, 1]
];
candles.forEach(([x, top, bottom, high, low, filled]) => {
  add("path", { d: `M${x + 0.5} ${high}V${low}`, stroke: "#2f9a35" });
  add("rect", { x: x - 2.5, y: top + 0.5, width: 6, height: bottom - top, fill: filled ? "#f4fff0" : "#000", stroke: filled ? "#dff5d8" : "#2f9a35" });
});

// Fractal levels: first dot, height, count, colour
const red = "#d8201c", blue = "#1818d0";
[[586, 147, 21, red], [586, 178, 3, blue], [618, 198, 13, blue], [985, 322.500, 5, red], [984, 354, 3, blue],
 [1016, 383.500, 4, blue], [1038, 352, 4, red], [1059, 379.500, 13, blue], [1081, 315, 4, red], [1124, 289.500, 8, red],
 [1199, 342, 3, blue], [1210, 309, 2, red]].forEach(([x, y, count, fill]) => {
  for (let i = 0; i < count; i++) add("circle", { cx: x + i * 10.75, cy: y, r: 1.8, fill });
});

// Signal board
const shapes = {
  r: ["M-9 -2H2L-3 -7L0 -8L8 0L0 8L-3 7L2 2H-9z", "#fff"],
  d: ["M-2 -10V1L-7 -4L-8 0L0 8L8 0L7 -4L2 1V-10z", "#f00"],
  u: ["M0 -8L8 1V5L4 3V6H-4V3L-8 5V1z", "#00f"]
};
[["EURUSD", "rrr"], ["GBPUSD", "drr"], ["AUDUSD", "dur"], ["NZDUSD", "drr"], ["GBPJPY", "drd"], ["GBPAUD", "rrr"], ["USDJPY", "rdd"]].forEach(([pair, dirs], row) => {
  const y = 146 + row * 14.8;
  add("text", { x: 1147, y: y + 7, "text-anchor": "end", class: "pair" }, pair);
  [...dirs].forEach((dir, col) => {
    const [d, fill] = shapes[dir];
    add("path", { d, fill, transform: `translate(${1157 + col * 20} ${y})` });
  });
});
[[1145, "H4"], [1165, "D1"], [1185, "W1"]].forEach(([x, label]) => add("text", { x, y: 138, class: "frame" }, label));
```
